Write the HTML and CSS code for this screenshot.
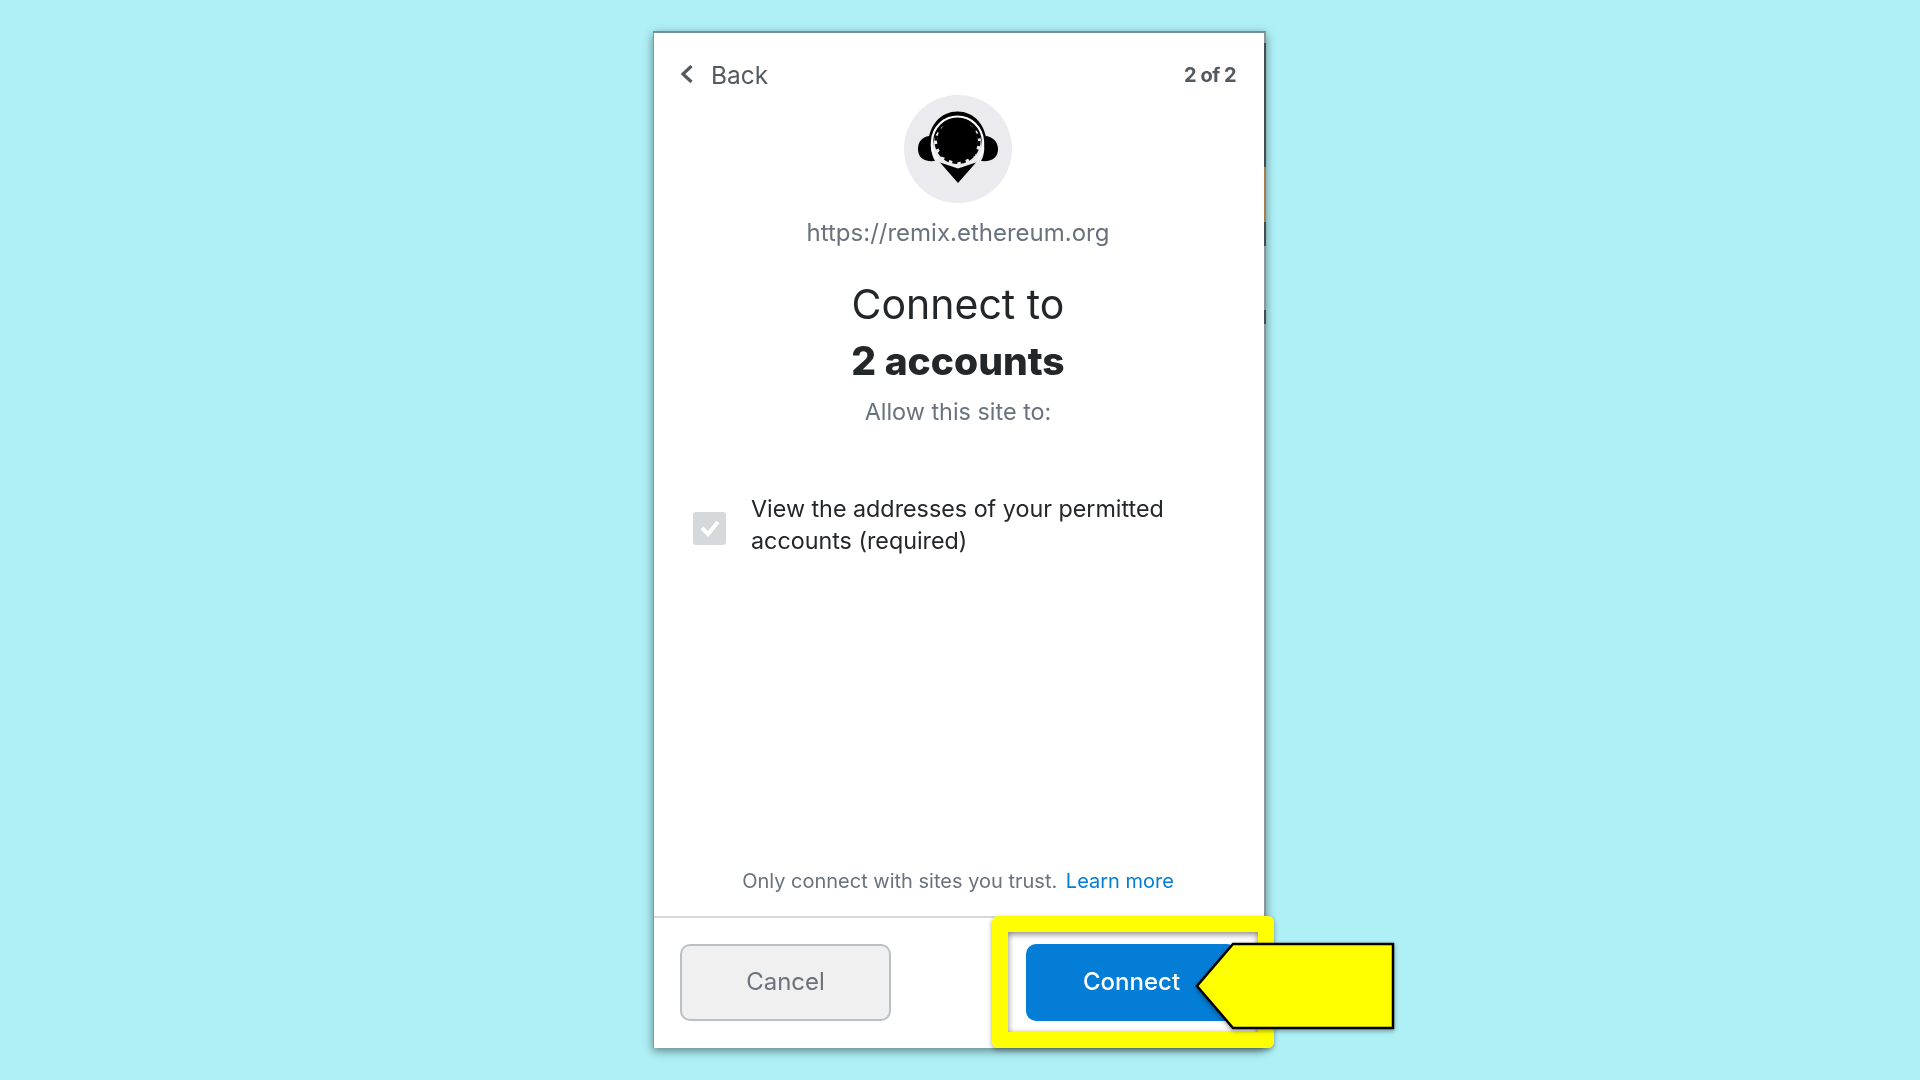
FILE: index.html
```html
<!DOCTYPE html>
<html lang="en">
<head>
  <meta charset="UTF-8">
  <meta name="viewport" content="width=device-width, initial-scale=1">
  <title>Connect to 2 accounts</title>
  <link rel="stylesheet" href="styles.css">
</head>
<body>

  <main class="card">
    <div class="edge"></div>

    <header class="top-row">
      <a class="back" href="#">
        <svg class="back-icon" width="14" height="20" viewBox="0 0 14 20">
          <path d="M11.5 1 L3 9 L11.5 17" fill="none" stroke="#535a61" stroke-width="3.2"/>
        </svg>
        Back
      </a>
      <span class="step">2 of 2</span>
    </header>

    <div class="logo">
      <svg width="108" height="108" viewBox="0 0 108 108">
        <circle cx="54" cy="54" r="54" fill="#ebebef"/>
        <!-- headband -->
        <path d="M24 52 C24 30 37 16.5 53.5 16.5 C70 16.5 83 30 83 52 L78 52 A24.5 26 0 0 0 29 52 Z" fill="#000"/>
        <!-- ear cups -->
        <path d="M25 41 C18 42 14 47 14 54 C14 62 19 67 31 66 C27 60 26 50 28 41 Z" fill="#000"/>
        <path d="M82 41 C89 42 94 47 94 54 C94 62 89 67 77 66 C81 60 81 50 79 41 Z" fill="#000"/>
        <!-- white ring round the disc -->
        <path d="M33 64 C28 58 27.5 50 28 46 C29 32 40 21.5 53.5 21.5 C67 21.5 78 32 79 46 C79.5 50 79 58 74 64" fill="none" stroke="#fbfbfc" stroke-width="2.2"/>
        <!-- toothed disc -->
        <circle cx="53.5" cy="46" r="20.5" fill="#000"/>
        <circle cx="53.5" cy="46" r="21.5" fill="none" stroke="#000" stroke-width="3" stroke-dasharray="5 3.44"/>
        <path d="M35 56 L36 61 L53.5 67.5 L71 61 L72 56 Z" fill="#000"/>
        <!-- pin -->
        <path d="M36 67.5 L54 73.5 L72 67.5 L54 88 Z" fill="#000"/>
      </svg>
    </div>

    <p class="origin">https://remix.ethereum.org</p>

    <h1 class="title">Connect to<br><strong>2 accounts</strong></h1>
    <p class="allow">Allow this site to:</p>

    <div class="permission">
      <span class="check">
        <svg width="22" height="20" viewBox="0 0 22 20">
          <path d="M3 10 L9 16 L19 4" fill="none" stroke="#fff" stroke-width="4"/>
        </svg>
      </span>
      <span class="permission-text">View the addresses of your permitted<br>accounts (required)</span>
    </div>

    <p class="trust">Only connect with sites you trust. <a href="#">Learn more</a></p>

    <footer class="actions">
      <button class="btn btn-cancel">Cancel</button>
      <button class="btn btn-connect">Connect</button>
    </footer>

    <!-- tutorial annotation on top of the screenshot -->
    <div class="highlight"></div>
    <svg class="pointer" width="200" height="88" viewBox="0 0 200 88">
      <path d="M38 2 H198 V86 H38 L2 44 Z" fill="#ffff00" stroke="#000" stroke-width="2.5"/>
    </svg>
  </main>

</body>
</html>
```

FILE: styles.css
```css
body {
  margin: 0;
  height: 1080px;
  overflow: hidden;
  background: #aef0f6;
  font-family: "Inter", "Lato", sans-serif;
  color: #24272a;
  display: flex;
  justify-content: center;
  align-items: flex-start;
  padding: 31px 1px 0 0;
  box-sizing: border-box;
}

p, h1 {
  margin: 0;
}

/* the reference is an upscaled capture, everything in the card is a bit soft */
.top-row, .logo, .origin, .title, .allow, .permission, .trust, .actions {
  filter: blur(0.5px);
}

.card {
  position: relative;
  width: 613px;
  height: 1017px;
  padding-right: 2px;
  background: #fff;
  box-sizing: border-box;
  border-top: 2px solid #6f8f9a;
  border-left: 1px solid #7b9aa4;
  border-right: 2px solid #8b9499;
  box-shadow: 0 3px 9px rgba(0, 0, 0, 0.45);
  display: flex;
  flex-direction: column;
  align-items: center;
}

.edge {
  position: absolute;
  top: 10px;
  right: -2px;
  width: 2px;
  height: 291px;
  background: linear-gradient(to bottom,
    #454c50 0, #454c50 124px,
    #a87a50 124px, #a87a50 179px,
    #454c50 179px, #454c50 203px,
    #8b9499 203px, #8b9499 267px,
    #454c50 267px, #454c50 281px,
    #8b9499 281px);
}

.top-row {
  align-self: stretch;
  display: flex;
  justify-content: space-between;
  align-items: center;
  padding: 26px 26px 0 26px;
  height: 32px;
}

.back {
  display: flex;
  align-items: center;
  gap: 17px;
  color: #535a61;
  font-size: 24.5px;
  text-decoration: none;
}

.step {
  color: #535a61;
  font-size: 20px;
  font-weight: 700;
  letter-spacing: -0.5px;
}

.logo {
  margin-top: 4px;
  height: 108px;
}

.origin {
  margin-top: 8px;
  font-size: 24px;
  line-height: 44px;
  color: #6a737d;
}

.title {
  margin-top: 21px;
  font-size: 41px;
  font-weight: 400;
  line-height: 56px;
  text-align: center;
}

.title strong {
  font-size: 39px;
  font-weight: 800;
}

.allow {
  margin-top: 8px;
  font-size: 23.4px;
  line-height: 30px;
  color: #6a737d;
}

.permission {
  align-self: stretch;
  margin-top: 66px;
  padding-left: 39px;
  display: flex;
  align-items: center;
  gap: 25px;
}

.check {
  width: 33px;
  height: 33px;
  margin-top: 6px;
  background: #d6d9dc;
  border-radius: 3px;
  display: flex;
  align-items: center;
  justify-content: center;
}

.permission-text {
  font-size: 23.3px;
  line-height: 32px;
}

.trust {
  margin-top: auto;
  font-size: 20px;
  line-height: 28px;
  color: #6a737d;
  padding-bottom: 21px;
}

.trust a {
  margin-left: 3px;
  color: #037dd6;
  text-decoration: none;
}

.actions {
  align-self: stretch;
  border-top: 2px solid #d6d9dc;
  padding: 26px 25px 27px 26px;
  display: flex;
  justify-content: space-between;
}

.btn {
  height: 77px;
  border-radius: 10px;
  font-family: inherit;
  font-size: 24px;
  padding-bottom: 4px;
}

.btn-cancel {
  width: 211px;
  background: #f0f0f0;
  border: 2px solid #bbc0c5;
  color: #6a737d;
}

.btn-connect {
  width: 211px;
  background: #037dd6;
  border: none;
  color: #fff;
  font-weight: 500;
}

.highlight {
  position: absolute;
  left: 338px;
  top: 883px;
  width: 250px;
  height: 100px;
  border: solid #ffff00;
  border-width: 16px;
  border-radius: 6px;
  box-shadow: 0 2px 5px rgba(0, 0, 0, 0.35), inset 0 2px 6px rgba(0, 0, 0, 0.5);
}

.pointer {
  position: absolute;
  left: 541px;
  top: 909px;
  filter: drop-shadow(0 2px 2px rgba(0, 0, 0, 0.35));
}
```
